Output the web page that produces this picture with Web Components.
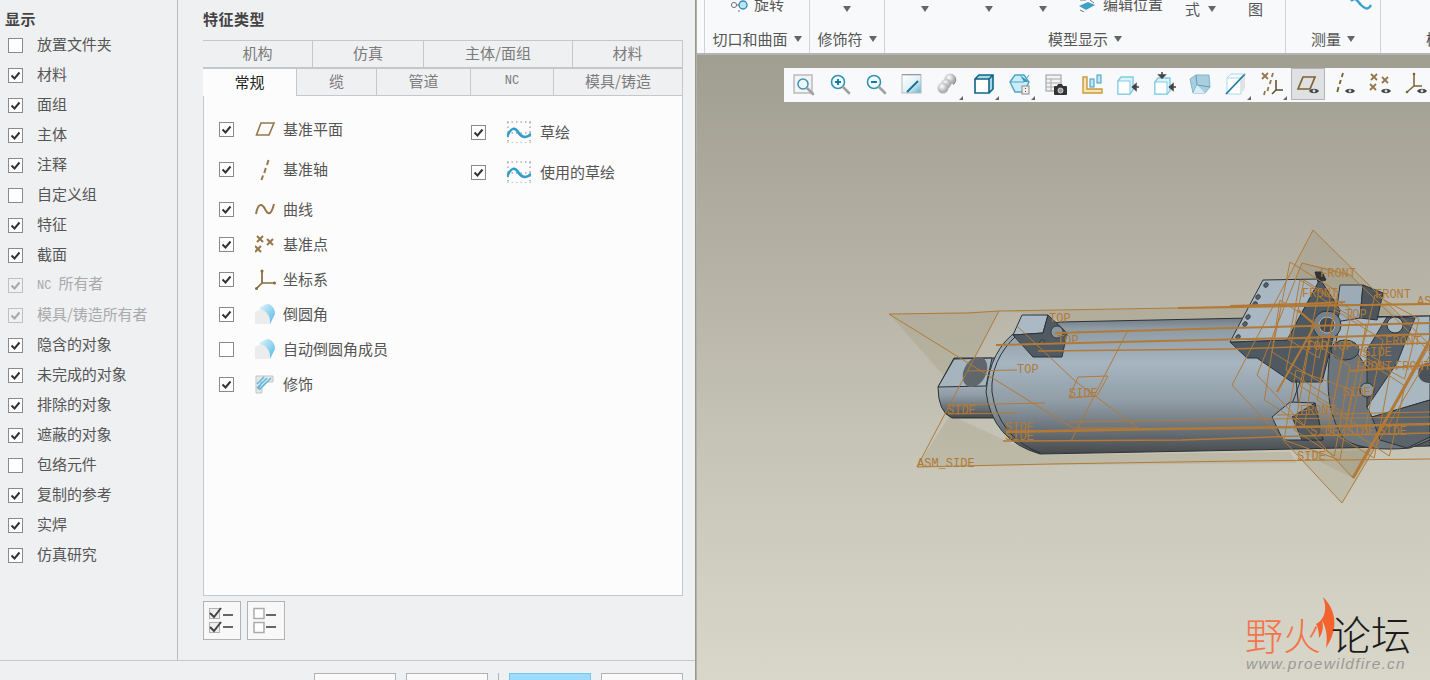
<!DOCTYPE html>
<html lang="zh">
<head>
<meta charset="utf-8">
<title>模型显示</title>
<style>
  html, body { margin: 0; height: 680px; overflow: hidden; background: #d8d6c9; }
  body { font-family: "Noto Sans CJK SC", "Liberation Sans", sans-serif; }
  .nc { font-family: "Liberation Mono", monospace; font-size: 12px; }
</style>
</head>
<body>
<pro-app>
  <setting-dialog slot="dialog">
    <check-row slot="filters" checked="false">放置文件夹</check-row>
    <check-row slot="filters">材料</check-row>
    <check-row slot="filters">面组</check-row>
    <check-row slot="filters">主体</check-row>
    <check-row slot="filters">注释</check-row>
    <check-row slot="filters" checked="false">自定义组</check-row>
    <check-row slot="filters">特征</check-row>
    <check-row slot="filters">截面</check-row>
    <check-row slot="filters" disabled><span class="nc">NC </span>所有者</check-row>
    <check-row slot="filters" disabled>模具/铸造所有者</check-row>
    <check-row slot="filters">隐含的对象</check-row>
    <check-row slot="filters">未完成的对象</check-row>
    <check-row slot="filters">排除的对象</check-row>
    <check-row slot="filters">遮蔽的对象</check-row>
    <check-row slot="filters" checked="false">包络元件</check-row>
    <check-row slot="filters">复制的参考</check-row>
    <check-row slot="filters">实焊</check-row>
    <check-row slot="filters">仿真研究</check-row>

    <tab-strip slot="tabs" cells="机构:110,仿真:111,主体/面组:149,材料:110"></tab-strip>
    <tab-strip slot="tabs" cells="常规:94:active,缆:80,管道:94,NC:83,模具/铸造:129"></tab-strip>

    <feature-row slot="col1" icon="plane" wide>基准平面</feature-row>
    <feature-row slot="col1" icon="axis" wide>基准轴</feature-row>
    <feature-row slot="col1" icon="curve">曲线</feature-row>
    <feature-row slot="col1" icon="points">基准点</feature-row>
    <feature-row slot="col1" icon="csys">坐标系</feature-row>
    <feature-row slot="col1" icon="round">倒圆角</feature-row>
    <feature-row slot="col1" icon="round" checked="false">自动倒圆角成员</feature-row>
    <feature-row slot="col1" icon="cosmetic">修饰</feature-row>
    <feature-row slot="col2" icon="sketch" wide>草绘</feature-row>
    <feature-row slot="col2" icon="sketch">使用的草绘</feature-row>
  </setting-dialog>

  <ribbon-bar slot="ribbon">
    <ribbon-group label="切口和曲面" width="105">
      <svg style="margin:0 5px 0 24px;position:relative;top:2px" width="20" height="12" viewBox="0 0 20 12"><circle cx="5" cy="5" r="2.6" fill="none" stroke="#777"/><circle cx="14" cy="5" r="4" fill="#bfe3f2" stroke="#2e8fb8" stroke-width="1.4"/><path d="M8 5h2M10 10v2" stroke="#777"/></svg>
      <span>旋转</span>
    </ribbon-group>
    <ribbon-group label="修饰符" width="75"><i class="c" style="margin-left:33px"></i></ribbon-group>
    <ribbon-group label="模型显示" width="401">
      <i class="c" style="margin-left:36px"></i><i class="c" style="margin-left:56px"></i><i class="c" style="margin-left:46px"></i>
      <svg style="margin:0 6px 0 30px;position:relative;top:2px" width="20" height="13" viewBox="0 0 20 13"><path d="M2 7l9-4 7 3-9 5z" fill="#3f9fc4"/><path d="M3 1h6M13 1l4 3M3 11l4 2" stroke="#777"/></svg>
      <span>编辑位置</span>
      <span style="margin-left:22px;position:relative;top:5px">式</span><i class="c" style="margin-left:8px"></i>
      <span style="margin-left:32px;position:relative;top:5px">图</span>
    </ribbon-group>
    <ribbon-group label="测量" width="95">
      <svg style="margin-left:63px;position:relative;top:2px" width="24" height="13" viewBox="0 0 24 13"><path d="M2 2c5-5 7 1 10 4s7 6 10 0" fill="none" stroke="#39a0cc" stroke-width="2.4"/></svg>
    </ribbon-group>
    <ribbon-group label="模型意图" width="165"></ribbon-group>
  </ribbon-bar>

  <model-view slot="view"></model-view>
  <view-toolbar slot="view">
    <tool-icon name="zoomfit"></tool-icon>
    <tool-icon name="zoomin"></tool-icon>
    <tool-icon name="zoomout"></tool-icon>
    <tool-icon name="repaint"></tool-icon>
    <tool-icon name="spheres" caret></tool-icon>
    <tool-icon name="cube" caret></tool-icon>
    <tool-icon name="lockcube" caret></tool-icon>
    <tool-icon name="table"></tool-icon>
    <tool-icon name="lshape"></tool-icon>
    <tool-icon name="cubein"></tool-icon>
    <tool-icon name="cubeboth"></tool-icon>
    <tool-icon name="glass"></tool-icon>
    <tool-icon name="section" caret></tool-icon>
    <tool-icon name="datums" caret></tool-icon>
    <tool-icon name="planeeye" active></tool-icon>
    <tool-icon name="axiseye"></tool-icon>
    <tool-icon name="pointseye"></tool-icon>
    <tool-icon name="csyseye"></tool-icon>
  </view-toolbar>
  <forum-logo slot="view"></forum-logo>
</pro-app>

<script>
(function () {
  'use strict';

  const eye = '<path d="M13 19c2-3 8-3 10 0-2 3-8 3-10 0z" fill="#444"/><circle cx="18" cy="19" r="1.4" fill="#ddd"/>';
  const mag = (x, y) => `<path d="M${x} ${y}l6 6" stroke="#a0a0a0" stroke-width="2.6" stroke-linecap="round"/>`;
  const cross = (x, y) => `M${x - 3} ${y - 3}l6 6M${x + 3} ${y - 3}l-6 6`;

  // feature icons, 22x22
  const FEATURE_ICONS = {
    plane: '<path d="M1.5 17L6 5h13l-5 12z" fill="none" stroke="#94774a" stroke-width="1.6"/>',
    axis: '<path d="M13.500 2l-1.500 5M10.800 10l-1.500 5M8 17.500L6.500 22" stroke="#94774a" stroke-width="2"/>',
    curve: '<path d="M1 16C3 5 7 5 10 11s6 7 9-5" fill="none" stroke="#94774a" stroke-width="2"/>',
    points: `<path d="${cross(5, 6)}${cross(15, 9)}${cross(3, 16)}" stroke="#94774a" stroke-width="2"/>`,
    csys: '<path d="M7 15V3M7 15h12M7 15l-6 6" fill="none" stroke="#86693b" stroke-width="1.700"/><circle cx="7" cy="3" r="1.500" fill="#86693b"/><circle cx="19.500" cy="15" r="1.500" fill="#86693b"/><circle cx="1.500" cy="20.500" r="1.500" fill="#86693b"/>',
    round: '<defs><linearGradient id="rg" x1="0" y1="0" x2="1" y2="1"><stop offset="0" stop-color="#e6f7fd"/><stop offset="1" stop-color="#4db6e6"/></linearGradient></defs><path d="M0 9l8-4 7 6v10H0z" fill="#ececec"/><path d="M4 5.500Q9 1 14 1q6 3 6 10l-5 10q1-12-11-15.500z" fill="url(#rg)"/>',
    cosmetic: '<path d="M1 3h17v6h-7l-4 4v7H1z" fill="#e8e8e8" stroke="#c4c4c4"/><path d="M2 11l7-7M2 15l10-10M4 17l12-12M7 9l-4 7" stroke="#63b8dd" stroke-width="1.700"/>'
  };
  const SKETCH_ICON = '<g stroke="#aeaeae" stroke-width="1.500" stroke-dasharray="1.500 3" fill="none"><path d="M0 1h24M0 12h24M0 22h24"/><path d="M1 1v21M23 1v21"/></g><path d="M0 16c4-10 8-10 11-5s8 7 13 2" fill="none" stroke="#2f9dcd" stroke-width="2.500"/>';

  // view toolbar icons, 24x24
  const TOOL_ICONS = {
    zoomfit: '<rect x="2" y="3" width="18" height="18" fill="#f3f3f3" stroke="#bbb" stroke-width="1.500"/><circle cx="11" cy="12" r="5" fill="#eef8fc" stroke="#3a93b5" stroke-width="1.500"/>' + mag(15, 16),
    zoomin: '<circle cx="10" cy="10" r="6.500" fill="#f2fafd" stroke="#2f93b8" stroke-width="1.600"/><path d="M7 10h6M10 7v6" stroke="#167ba3" stroke-width="2"/>' + mag(15, 15),
    zoomout: '<circle cx="10" cy="10" r="6.500" fill="#f2fafd" stroke="#2f93b8" stroke-width="1.600"/><path d="M7 10h6" stroke="#167ba3" stroke-width="2"/>' + mag(15, 15),
    repaint: '<defs><linearGradient id="rp" x1="0" y1="0" x2="1" y2="1"><stop offset="0" stop-color="#fff"/><stop offset=".55" stop-color="#dff1f8"/><stop offset="1" stop-color="#58b2d6"/></linearGradient></defs><rect x="2" y="3" width="19" height="18" fill="url(#rp)" stroke="#bbb"/><path d="M7 20l11-11" stroke="#1e6f92" stroke-width="2"/><path d="M2 2.500h19" stroke="#999"/>',
    spheres: '<defs><radialGradient id="sp" cx=".4" cy=".35"><stop offset="0" stop-color="#fff"/><stop offset="1" stop-color="#b0b0b0"/></radialGradient></defs><path d="M16 2c5 2 6 8 1 11z" fill="#888"/><circle cx="14" cy="7" r="5.500" fill="url(#sp)"/><circle cx="10" cy="12" r="5" fill="url(#sp)"/><circle cx="7" cy="16" r="5.500" fill="url(#sp)"/>',
    cube: '<path d="M3 7l4-4h14v14l-4 4z" fill="#a9d6e7"/><rect x="3" y="7" width="14" height="14" fill="#fff"/><path d="M3 7h14v14H3zM3 7l4-4h14v14l-4 4M17 7l4-4" fill="none" stroke="#0e6487" stroke-width="1.600"/>',
    lockcube: '<path d="M2 10l5-7h9l5 7-5 10H7z" fill="#c9ecf8" stroke="#4ba5c8" stroke-width="1.400"/><path d="M2 10h14l5-7" fill="none" stroke="#4ba5c8"/><path d="M12 3l4 7h5z" fill="#3d97bd"/><rect x="14" y="14" width="7" height="8" fill="#eee" stroke="#888"/><path d="M17.500 16v1M17.500 19v1" stroke="#555"/>',
    table: '<rect x="2" y="3" width="15" height="16" fill="#f2f2f2" stroke="#999"/><path d="M2 7h15M2 11h15M2 15h10M7 7v12" stroke="#aaa"/><rect x="10" y="14" width="13" height="9" rx="1" fill="#333"/><path d="M13 14l1-2h4l1 2" fill="#333"/><circle cx="16.500" cy="18.500" r="2.500" fill="#999" stroke="#fff" stroke-width=".7"/>',
    lshape: '<path d="M3 5h4v12h15v4H3z" fill="#f7e3b4" stroke="#c89a3e" stroke-width="1.400"/><rect x="10" y="7" width="4" height="8" fill="#c4e4f0" stroke="#3b9dc3"/><rect x="17" y="3" width="4" height="8" fill="#c4e4f0" stroke="#3b9dc3"/>',
    cubein: '<path d="M2 9l3-4h12v13l-3 4H2z" fill="#ddf3fb" stroke="#7fcbe6" stroke-width="1.400"/><rect x="2" y="9" width="12" height="13" fill="#fff" stroke="#7fcbe6"/><path d="M23 15h-5M20 12l-3.500 3 3.500 3z" fill="#444" stroke="#444" stroke-width="1.500"/>',
    cubeboth: '<path d="M3 10l3-4h12v13l-3 3H3z" fill="#ddf3fb" stroke="#7fcbe6" stroke-width="1.400"/><rect x="3" y="10" width="12" height="12" fill="#fff" stroke="#7fcbe6"/><path d="M24 15h-5M21 12l-3.500 3 3.500 3z" fill="#444" stroke="#444" stroke-width="1.500"/><path d="M10 0v4M7 3l3 3 3-3z" fill="#444" stroke="#444" stroke-width="1.500"/>',
    glass: '<path d="M2 7l6-4h13l1 12-5 6H5z" fill="#a9cfdf" stroke="#7fb5cc"/><path d="M8 3l1 10 13 2M9 13l-4 8" fill="none" stroke="#5f9db8"/><path d="M9 13l8 8H5z" fill="#d8edf5"/>',
    section: '<path d="M3 6h14v16H3z" fill="#fff" stroke="#a8d8ea"/><path d="M17 6l4-4v14l-4 6z" fill="#e2e2e2"/><path d="M2 22L21 2" stroke="#1c7ba3" stroke-width="1.800"/><path d="M3 6l4-4h14" fill="none" stroke="#a8d8ea"/>',
    datums: `<path d="${cross(5, 4)}M13 1l-1.200 4M11 8l-1.200 4M8.500 15l-1 4M5 19l-1 4" stroke="#94774a" stroke-width="1.800"/><path d="M16 8v10M16 18h7M16 18l-4 4" fill="none" stroke="#5c4a2a" stroke-width="1.500"/>`,
    planeeye: '<path d="M2 17L7 5h12l-5 12z" fill="none" stroke="#7b6233" stroke-width="1.700"/>' + eye,
    axiseye: '<path d="M11 1l-1.200 4M8.800 8l-1.200 4M6.500 15l-1.200 5" stroke="#7b6233" stroke-width="1.900"/>' + eye,
    pointseye: `<path d="${cross(6, 5)}${cross(17, 8)}${cross(5, 15)}" stroke="#94774a" stroke-width="1.800"/>` + eye,
    csyseye: '<path d="M10 14V2M10 14h8M10 14l-7 6" fill="none" stroke="#7b6233" stroke-width="1.500"/><circle cx="10" cy="2" r="1.300" fill="#7b6233"/><circle cx="3" cy="20" r="1.300" fill="#7b6233"/>' + eye
  };

  function define(name, css, html) {
    class El extends HTMLElement {
      constructor() {
        super();
        this.attachShadow({ mode: 'open' });
        if (typeof html !== 'function') this.shadowRoot.innerHTML = `<style>${css}</style>${html}`;
      }
      connectedCallback() {
        if (typeof html === 'function') this.shadowRoot.innerHTML = `<style>${css}</style>${html(this)}`;
      }
    }
    customElements.define(name, El);
  }

  const box = (on, off) => `<span class="box${off ? ' off' : ''}">${on ? '<svg width="13" height="13" viewBox="0 0 13 13"><path d="M2.500 6.500l3 3 5-6" fill="none" stroke="' + (off ? '#a8a8a8' : '#333') + '" stroke-width="2"/></svg>' : ''}</span>`;
  const boxCss = `
    .box { flex: none; box-sizing: border-box; width: 15px; height: 15px; border: 1.5px solid #8a8a8a; background: #fff;
      display: flex; align-items: center; justify-content: center; }
    .box.off { border-color: #c0c0c0; background: #f1f1f1; }
    .box svg { display: block; margin: -1px; }`;

  define('pro-app', `
    :host { display: flex; width: 1430px; height: 680px; overflow: hidden; }
    .right { flex: 1; min-width: 0; display: flex; flex-direction: column; }
    .view { position: relative; flex: 1; min-height: 0; overflow: hidden;
      background: linear-gradient(#a09d91 0%, #c6c4b6 62%, #d9d7ca 100%); }
    .shade { flex: none; width: 2px; background: linear-gradient(90deg, #8d8c84, #bdbcb2); }
  `, `<slot name="dialog"></slot><div class="shade"></div>
      <div class="right"><slot name="ribbon"></slot><div class="view"><slot name="view"></slot></div></div>`);

  define('setting-dialog', `
    :host { flex: none; display: flex; flex-direction: column; width: 695px; height: 680px; background: #eff0f2;
      color: #555; font-size: 15px; }
    .top { flex: 1; min-height: 0; display: flex; }
    .side { flex: none; width: 177px; border-right: 1px solid #b8b9bb; }
    h2 { margin: 0; font-size: 15px; line-height: 20px; font-weight: 700; color: #444; letter-spacing: .5px; position: relative; top: -1px; }
    .side h2 { padding: 10px 0 0 5px; }
    .main { flex: 1; padding: 10px 12px 0 25px; }
    .panel { box-sizing: border-box; height: 500px; background: #fcfcfc; border: 1px solid #c6c7c9; border-top: 0;
      display: grid; grid-template-columns: 267px 1fr; }
    .col { display: flex; flex-direction: column; gap: 15px; padding: 23px 0 0 15px; }
    .col.b { padding-top: 26px; padding-left: 0; }
    .tabs { margin-top: 10px; }
    .acts { display: flex; gap: 6px; margin-top: 5px; }
    .act { box-sizing: border-box; width: 38px; height: 39px; border: 1px solid #b3b3b3; background: #f8f8f8;
      display: flex; align-items: center; justify-content: center; }
    .foot { flex: none; box-sizing: border-box; height: 20px; border-top: 1px solid #c6c7c9; display: flex;
      padding: 12px 12px 0 314px; align-items: flex-start; }
    .btn { box-sizing: border-box; width: 82px; height: 20px; flex: none; border: 1px solid #b3b3b3; background: #fafafa; }
    .btn + .btn { margin-left: 10px; }
    .btn.go { background: #9edcff; border-color: #77c6ee; }
    .sep { flex: none; width: 1px; height: 12px; background: #b3b3b3; margin: 0 10px; }
  `, `
    <div class="top">
      <div class="side"><h2>显示</h2><slot name="filters"></slot></div>
      <div class="main">
        <h2>特征类型</h2>
        <div class="tabs"><slot name="tabs"></slot></div>
        <div class="panel">
          <div class="col"><slot name="col1"></slot></div>
          <div class="col b"><slot name="col2"></slot></div>
        </div>
        <div class="acts">
          <div class="act"><svg width="28" height="27" viewBox="0 0 28 27"><g fill="#eee" stroke="#b0b0b0"><rect x="1.500" y="1.500" width="10" height="10"/><rect x="1.500" y="15.500" width="10" height="10"/></g><path d="M2 6l4 4 7-9M2 20l4 4 7-9" fill="none" stroke="#444" stroke-width="2"/><path d="M15 8h10M15 20h10" stroke="#666" stroke-width="2"/></svg></div>
          <div class="act"><svg width="28" height="27" viewBox="0 0 28 27"><g fill="#fff" stroke="#aaa" stroke-width="1.500"><rect x="2" y="1.500" width="10" height="10"/><rect x="2" y="15.500" width="10" height="10"/></g><path d="M14 8h10M14 20h10" stroke="#666" stroke-width="2"/></svg></div>
        </div>
      </div>
    </div>
    <div class="foot"><div class="btn"></div><div class="btn"></div><div class="sep"></div><div class="btn go"></div><div class="btn"></div></div>
  `);

  define('check-row', `
    :host { display: flex; align-items: center; height: 30px; padding-left: 8px; gap: 14px; line-height: 20px; letter-spacing: -.05px; }
    :host([disabled]) { color: #a9a9a9; }
    .t { padding-bottom: 2px; }
    ${boxCss}
  `, (el) => `${box(el.getAttribute('checked') !== 'false', el.hasAttribute('disabled'))}<span class="t"><slot></slot></span>`);

  define('feature-row', `
    :host { display: flex; align-items: center; height: 20px; }
    :host([wide]) { margin-bottom: 5px; }
    ${boxCss}
    .ic { flex: none; margin-left: 21px; width: 22px; height: 22px; display: block; }
    .ic.s { margin-left: 21px; width: 24px; }
    .t { margin-left: 6px; white-space: nowrap; padding-bottom: 2px; }
    .t.s { margin-left: 9px; }
  `, (el) => {
    const name = el.getAttribute('icon');
    const sk = name === 'sketch';
    return `${box(el.getAttribute('checked') !== 'false', false)}
      <svg class="ic${sk ? ' s' : ''}" viewBox="0 0 ${sk ? 24 : 22} 22">${sk ? SKETCH_ICON : FEATURE_ICONS[name]}</svg>
      <span class="t${sk ? ' s' : ''}"><slot></slot></span>`;
  });

  define('tab-strip', `
    :host { display: flex; height: 28px; font-size: 15px; color: #7b7b7b; }
    .cell { box-sizing: border-box; height: 28px; border: 1px solid #c6c7c9; border-left: 0; display: flex; padding-bottom: 3px;
      align-items: center; justify-content: center; white-space: nowrap; }
    .cell:first-child { border-left: 1px solid #c6c7c9; }
    .cell.active { background: #fcfcfc; color: #222; border-bottom: 0; }
    .m { font-family: "Liberation Mono", monospace; font-size: 12px; }
  `, (el) => el.getAttribute('cells').split(',').map((c) => {
    const [text, w, state] = c.split(':');
    const label = text === 'NC' ? '<span class="m">NC</span>' : text;
    return `<div class="cell ${state || ''}" style="width:${w}px">${label}</div>`;
  }).join(''));

  define('ribbon-bar', `
    :host { flex: none; display: flex; box-sizing: border-box; height: 55px; background: #f8f9fb; padding-left: 7px;
      border-bottom: 2px solid #b4b4b2; overflow: hidden; color: #555; }
  `, '<slot></slot>');

  define('ribbon-group', `
    :host { flex: none; display: flex; flex-direction: column; box-sizing: border-box; height: 53px; border-left: 1px solid #d0d2d5; font-size: 15px; }
    .items { height: 27px; margin-top: -10px; display: flex; align-items: center; margin-bottom: 10px; white-space: nowrap; }
    ::slotted(span) { line-height: 20px; }
    ::slotted(i.c) { position: relative; top: 5px; }
    ::slotted(i.c), .tri { display: inline-block; width: 0; height: 0; border: 4px solid transparent; border-top: 6px solid #666; border-bottom: 0; flex: none; }
    .lab { flex: 1; display: flex; align-items: center; justify-content: center; gap: 6px; padding-bottom: 3px; white-space: nowrap; }
  `, (el) => {
    el.style.width = el.getAttribute('width') + 'px';
    return `<div class="items"><slot></slot></div>
      <div class="lab">${el.getAttribute('label')}<span class="tri"></span></div>`;
  });

  define('view-toolbar', `
    :host { position: relative; display: flex; box-sizing: border-box; width: 646px; height: 34px; margin: 13px 0 0 87px;
      padding-left: 2px; background: #f8f9fb; }
  `, '<slot></slot>');

  define('tool-icon', `
    :host { position: relative; flex: none; display: flex; align-items: center; justify-content: center; box-sizing: border-box;
      width: 36px; height: 32px; }
    :host([active]) { background: #dfe0e2; border: 1px solid #b3b4b6; width: 34px; margin: 0 1px; }
    svg { display: block; }
    .caret { position: absolute; right: 3px; bottom: 0; width: 0; height: 0; border-left: 4px solid transparent; border-bottom: 4px solid #666; }
  `, (el) => `<svg width="24" height="24" viewBox="0 0 24 24">${TOOL_ICONS[el.getAttribute('name')]}</svg>${el.hasAttribute('caret') ? '<span class="caret"></span>' : ''}`);

  // free canvas, page coordinates
  const EDGE = 'stroke="#2c3236" stroke-width="1" stroke-linejoin="round"';
  const face = (pts, fill) => `<polygon points="${pts}" fill="${fill}" ${EDGE}/>`;
  const hole = (x, y, rx, ry) => `<ellipse cx="${x}" cy="${y}" rx="${rx || 2.5}" ry="${ry || 2}" fill="#59636b" stroke="#2c3236" stroke-width=".8" transform="rotate(-45 ${x} ${y})"/>`;
  const line = (pts, w) => `<polyline points="${pts}" fill="none" stroke="#b27a36" stroke-width="${w || 1}"/>`;
  const para = (x, y, w, h, lean) => line(`${x},${y} ${x + w},${y + lean} ${x + w - lean * .6},${y + lean + h} ${x - lean * .6},${y + h} ${x},${y}`);

  const LABELS = [
    [917, 467, 'ASM_SIDE'], [1049, 322, 'TOP'], [1057, 344, 'TOP'], [1017, 373, 'TOP'], [1069, 397, 'SIDE'],
    [947, 414, 'SIDE'], [1005, 431, 'SIDE'], [1005, 440, 'SIDE'], [1297, 460, 'SIDE'], [1320, 277, 'FRONT'],
    [1375, 298, 'FRONT'], [1417, 305, 'AS'], [1302, 297, 'FRONT'], [1300, 414, 'FRONT'], [1310, 435, 'SIDE/SIDE/'],
    [1378, 435, 'SIDE'], [1342, 396, 'SIDE'], [1385, 345, 'FRONT'], [1306, 350, 'TOP'], [1331, 350, 'TOP'],
    [1356, 370, 'FRONT'], [1395, 370, 'FRONT'], [1363, 356, 'SIDE'], [1345, 318, 'TOP']
  ];
  const modelSvg = `
    <svg width="733" height="625" viewBox="697 55 733 625">
      <defs>
        <linearGradient id="body" x1="0" y1="0" x2="0" y2="1">
          <stop offset="0" stop-color="#6c747b"/><stop offset=".09" stop-color="#8d9ba5"/><stop offset=".34" stop-color="#a7b5c0"/>
          <stop offset=".62" stop-color="#909da7"/><stop offset=".86" stop-color="#636a70"/><stop offset="1" stop-color="#46494b"/>
        </linearGradient>
      </defs>
      <g fill="#8a7a58" fill-opacity=".16">
        <polygon points="889,314 999,311 958,392"/>
        <polygon points="1000,311 1260,307 1260,320 1063,322 1048,315"/>
        <polygon points="950,415 1000,438 1040,455 1290,452 1297,463 1050,465 917,467"/>
        <polygon points="1313,230 1430,345 1430,360 1342,503 1232,385"/>
        <polygon points="1257,375 1353,478 1430,345 1350,275 1302,263"/>
        <polygon points="1300,452 1353,478 1375,450"/>
      </g>
      <!-- shaft -->
      <path d="M938 387Q938 412 952 418H995V358H954z" fill="url(#body)" ${EDGE}/>
      ${face('954,359 992,358 986,386 938,387', '#a6b4be')}
      <ellipse cx="975" cy="372" rx="11" ry="16" fill="#5f676d" transform="rotate(28 975 372)"/>
      <!-- cylinder and flange -->
      <path d="M1017 331L1060 322 1250 318 1430 316V446L1250 450 1040 454Q992 440 986 392Q990 350 1017 331z" fill="url(#body)" ${EDGE}/>
      <path d="M1017 335Q990 360 992 392Q998 436 1040 453" fill="none" ${EDGE}/>
      ${face('1022,315 1048,315 1043,333 1013,335', '#abb9c4')}
      ${face('1013,335 1043,333 1048,315 1067,333 1062,357 1033,357', '#505a62')}
      <circle cx="1057" cy="332" r="6" fill="#8b979f" stroke="#2c3236" stroke-width=".8"/>
      ${hole(1042, 342)}
      <!-- far end -->
      ${face('1340,318 1430,316 1430,410 1345,420 1330,380', '#a9b7c1')}
      <path d="M1330 352Q1322 410 1345 440Q1365 452 1410 448L1430 440V400Q1380 415 1372 417L1367 407 1375 380 1355 350z" fill="#6d767d" ${EDGE}/>
      ${face('1367,350 1387,317 1415,318 1397,363 1367,407', '#565f67')}
      ${face('1372,417 1430,400 1430,437 1407,448 1380,440', '#5b646b')}
      <circle cx="1395" cy="325" r="8" fill="#a9b7c1" ${EDGE}/>
      <circle cx="1367" cy="390" r="7" fill="#8e9aa3" ${EDGE}/>
      <circle cx="1428" cy="373" r="10" fill="#4b5359"/>
      ${face('1340,285 1363,285 1360,318 1335,322', '#9dabb6')}
      ${face('1363,285 1383,293 1377,320 1360,318', '#4d565d')}
      ${face('1230,342 1287,340 1320,279 1340,310 1327,363 1322,382 1292,382 1257,358 1247,358', '#4f5961')}
      ${face('1263,280 1320,279 1287,340 1230,342', '#a9b7c2')}
      ${[[1266, 285], [1258, 297], [1255, 304], [1248, 317], [1245, 324], [1238, 337]].map((p) => hole(p[0], p[1])).join('')}
      <circle cx="1327" cy="325" r="14" fill="#76828b" ${EDGE}/>
      <circle cx="1327" cy="325" r="8" fill="#454d53" stroke="#a9b7c2" stroke-width="1"/>
      <ellipse cx="1345" cy="350" rx="14" ry="10" fill="#5c656c" ${EDGE}/>
      <path d="M1296 380l3 30M1300 382l-8 22" fill="none" ${EDGE}/>
      ${face('1272,417 1290,402 1315,403 1323,440 1283,440', '#9aa8b3')}
      ${face('1292,417 1315,403 1323,440 1302,440', '#4f5961')}
      ${face('1315,272 1322,272 1326,280 1318,282', '#2e3438')}
      <!-- datum planes -->
      ${line('889,314 968,313 999,311 1178,308 1300,305 1430,304')}
      ${line('889,314 1073,428 1138,428')}
      ${line('999,311 917,467 1050,464 1241,461 1430,459')}
      ${line('1127,332 1071,441')}
      ${line('1018,327 1075,381 1138,428')}
      ${line('1078,377 1108,376 1097,396 1069,398 1078,377')}
      ${line('1313,230 1430,345')}
      ${line('1313,230 1232,385 1342,503 1430,355')}
      ${line('1257,375 1353,478 1430,345')}
      ${line('1302,263 1257,375')}
      ${line('1350,275 1302,263')}
      ${line('1350,275 1430,352')}
      ${line('1178,308 1300,306 1430,304', 2)}
      ${line('1055,333 1231,328 1430,323', 2)}
      ${line('996,345 1160,341 1300,338 1430,334', 2)}
      ${line('1038,351 1231,349 1430,343', 1.5)}
      ${line('968,371 1017,370')}
      ${line('948,405 1045,403')}
      ${line('948,414 1017,413')}
      ${line('1069,422 1266,419 1430,417')}
      ${line('1006,432 1160,429 1300,427 1430,424', 2.5)}
      ${line('1003,441 1182,440 1300,436 1430,433', 1.5)}
      ${line('1277,415 1430,412')}
      ${line('1350,371 1430,365', 2)}
      ${line('1353,478 1400,395 1430,340', 3)}
      ${line('1298,310 1315,325 1277,392', 2)}
      ${line('1230,306 1300,304 1345,302', 2)}
      ${para(1290, 262, 48, 90, 30)}${para(1304, 280, 48, 90, 30)}${para(1318, 296, 48, 90, 30)}
      ${para(1335, 310, 48, 90, 30)}${para(1280, 300, 40, 100, 26)}${para(1310, 340, 40, 90, 26)}
      ${para(1345, 340, 46, 90, 28)}${para(1365, 360, 40, 70, 26)}${para(1296, 370, 56, 70, 20)}
      ${para(1300, 280, 30, 60, 18)}${para(1375, 295, 44, 60, 24)}
      <g font-family="Liberation Mono, monospace" font-size="12" fill="#b27a36">
        ${LABELS.map((l) => `<text x="${l[0]}" y="${l[1]}">${l[2]}</text>`).join('')}
      </g>
    </svg>`;

  define('model-view', `
    :host { position: absolute; left: 0; top: 0; display: block; }
    svg { display: block; }
  `, modelSvg);

  define('forum-logo', `
    :host { position: absolute; left: 548px; top: 538px; width: 175px; height: 84px; display: block; font-family: "Noto Sans CJK SC", sans-serif; }
    .row { position: absolute; left: 0; top: 15px; font-size: 38px; line-height: 50px; font-weight: 300; white-space: nowrap; }
    .o { color: #f3744a; }
    .k { color: #1b1b1b; margin-left: 10px; font-size: 40px; }
    svg { position: absolute; left: 62px; top: 3px; }
    .url { position: absolute; left: 1px; top: 62px; font: italic 15.5px "Liberation Sans", sans-serif; letter-spacing: 1.2px; color: #9a9a96; white-space: nowrap; }
  `, `
    <svg width="36" height="56" viewBox="0 0 36 56"><path d="M16 1c12 12 17 30 3 51 2-12 0-20-4-28 2 8 0 14-3 18 0-6-1-11-3-14 8-4 12-14 7-27z" fill="#f4622d"/></svg>
    <div class="row"><span class="o">野火</span><span class="k">论坛</span></div>
    <div class="url">www.proewildfire.cn</div>
  `);
})();
</script>
</body>
</html>
